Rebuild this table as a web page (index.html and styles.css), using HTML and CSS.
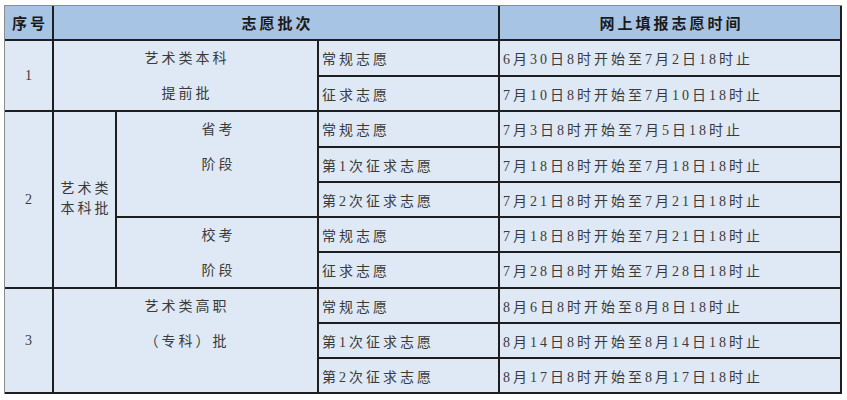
FILE: index.html
```html
<!DOCTYPE html>
<html lang="zh">
<head>
<meta charset="utf-8">
<link rel="stylesheet" href="styles.css">
</head>
<body>
<div class="sheet">
  <div class="cell head c1 r1">序号</div>
  <div class="cell head c2-4 r1">志愿批次</div>
  <div class="cell head c5 r1">网上填报志愿时间</div>

  <div class="cell num c1 r2-3">1</div>
  <div class="cell stack c2-3 r2-3"><span>艺术类本科</span><span>提前批</span></div>
  <div class="cell left c4 r2">常规志愿</div>
  <div class="cell left c5 r2">6月30日8时开始至7月2日18时止</div>
  <div class="cell left c4 r3">征求志愿</div>
  <div class="cell left c5 r3">7月10日8时开始至7月10日18时止</div>

  <div class="cell num c1 r4-8">2</div>
  <div class="cell tight c2 r4-8"><span>艺术类</span><span>本科批</span></div>
  <div class="cell stack c3 r4-6"><span>省考</span><span>阶段</span></div>
  <div class="cell left c4 r4">常规志愿</div>
  <div class="cell left c5 r4">7月3日8时开始至7月5日18时止</div>
  <div class="cell left c4 r5">第1次征求志愿</div>
  <div class="cell left c5 r5">7月18日8时开始至7月18日18时止</div>
  <div class="cell left c4 r6">第2次征求志愿</div>
  <div class="cell left c5 r6">7月21日8时开始至7月21日18时止</div>
  <div class="cell stack c3 r7-8"><span>校考</span><span>阶段</span></div>
  <div class="cell left c4 r7">常规志愿</div>
  <div class="cell left c5 r7">7月18日8时开始至7月21日18时止</div>
  <div class="cell left c4 r8">征求志愿</div>
  <div class="cell left c5 r8">7月28日8时开始至7月28日18时止</div>

  <div class="cell num c1 r9-11">3</div>
  <div class="cell stack c2-3 r9-11"><span>艺术类高职</span><span>（专科）批</span></div>
  <div class="cell left c4 r9">常规志愿</div>
  <div class="cell left c5 r9">8月6日8时开始至8月8日18时止</div>
  <div class="cell left c4 r10">第1次征求志愿</div>
  <div class="cell left c5 r10">8月14日8时开始至8月14日18时止</div>
  <div class="cell left c4 r11">第2次征求志愿</div>
  <div class="cell left c5 r11">8月17日8时开始至8月17日18时止</div>
</div>
</body>
</html>
```

FILE: styles.css
```css
html, body {
  margin: 0;
  padding: 0;
  background: #ffffff;
}

body {
  padding: 5px 0 0 4px;
  font-family: "Liberation Serif", "Noto Sans CJK SC", serif;
  font-size: 14px;
  color: #3a3a3a;
}

.sheet {
  display: grid;
  grid-template-columns: 47px 61px 200px 179px 340px;
  grid-template-rows: 33px 34px 33px 34px 33px 33px 33px 34px 33px 33px 33px;
  gap: 2px;
  width: max-content;
  background: #1e1e1e;
  border-top: 1px solid #8c8c8c;
  border-left: 1px solid #8c8c8c;
  padding: 0 2px 2px 0;
}

.cell {
  background: #dfe9f5;
  letter-spacing: 3px;
  white-space: nowrap;
}

.head {
  background: #a8c4e4;
  font-size: 15px;
  font-weight: bold;
  color: #1a1a1a;
  display: flex;
  align-items: center;
  justify-content: center;
  padding-left: 3px;
}

.num {
  display: flex;
  align-items: center;
  justify-content: center;
  letter-spacing: 0;
}

.left {
  display: flex;
  align-items: center;
  padding-left: 3px;
}

.stack {
  display: flex;
  flex-direction: column;
  align-items: center;
  line-height: 35px;
  padding-left: 3px;
}

.tight {
  display: flex;
  flex-direction: column;
  align-items: center;
  justify-content: center;
  line-height: 20px;
  padding-left: 3px;
  padding-bottom: 2px;
}

.c1 { grid-column: 1; }
.c2 { grid-column: 2; }
.c3 { grid-column: 3; }
.c4 { grid-column: 4; }
.c5 { grid-column: 5; }
.c2-3 { grid-column: 2 / 4; }
.c2-4 { grid-column: 2 / 5; }

.r1 { grid-row: 1; }
.r2 { grid-row: 2; }
.r3 { grid-row: 3; }
.r4 { grid-row: 4; }
.r5 { grid-row: 5; }
.r6 { grid-row: 6; }
.r7 { grid-row: 7; }
.r8 { grid-row: 8; }
.r9 { grid-row: 9; }
.r10 { grid-row: 10; }
.r11 { grid-row: 11; }
.r2-3 { grid-row: 2 / 4; }
.r4-6 { grid-row: 4 / 7; }
.r4-8 { grid-row: 4 / 9; }
.r7-8 { grid-row: 7 / 9; }
.r9-11 { grid-row: 9 / 12; }
```
